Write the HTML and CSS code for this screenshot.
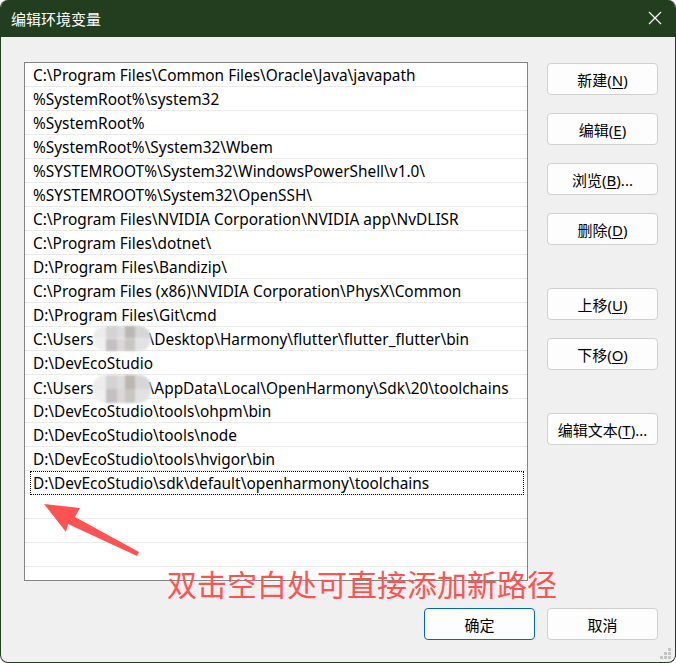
FILE: index.html
```html
<!DOCTYPE html>
<html>
<head>
<meta charset="utf-8">
<link rel="stylesheet" href="styles.css">
</head>
<body>

<div class="window">
    <div class="titlebar">
        <span class="title">编辑环境变量</span>
        <svg class="close" width="14" height="14" viewBox="0 0 14 14">
            <path d="M1 1 L13 13 M13 1 L1 13" stroke="#fff" stroke-width="1.2" fill="none"/>
        </svg>
    </div>

    <div class="content">
        <div class="path-list">
            <div class="row">C:\Program Files\Common Files\Oracle\Java\javapath</div>
            <div class="row">%SystemRoot%\system32</div>
            <div class="row">%SystemRoot%</div>
            <div class="row">%SystemRoot%\System32\Wbem</div>
            <div class="row">%SYSTEMROOT%\System32\WindowsPowerShell\v1.0\</div>
            <div class="row">%SYSTEMROOT%\System32\OpenSSH\</div>
            <div class="row">C:\Program Files\NVIDIA Corporation\NVIDIA app\NvDLISR</div>
            <div class="row">C:\Program Files\dotnet\</div>
            <div class="row">D:\Program Files\Bandizip\</div>
            <div class="row">C:\Program Files (x86)\NVIDIA Corporation\PhysX\Common</div>
            <div class="row">D:\Program Files\Git\cmd</div>
            <div class="row">C:\Users<span class="blur"></span>\Desktop\Harmony\flutter\flutter_flutter\bin</div>
            <div class="row">D:\DevEcoStudio</div>
            <div class="row">C:\Users<span class="blur blur-2"></span>\AppData\Local\OpenHarmony\Sdk\20\toolchains</div>
            <div class="row">D:\DevEcoStudio\tools\ohpm\bin</div>
            <div class="row">D:\DevEcoStudio\tools\node</div>
            <div class="row">D:\DevEcoStudio\tools\hvigor\bin</div>
            <div class="row focused">D:\DevEcoStudio\sdk\default\openharmony\toolchains</div>
            <div class="row"></div>
            <div class="row"></div>
            <div class="row"></div>
            <div class="row"></div>
        </div>

        <div class="side-buttons">
            <button class="btn">新建(<u>N</u>)</button>
            <button class="btn">编辑(<u>E</u>)</button>
            <button class="btn">浏览(<u>B</u>)...</button>
            <button class="btn">删除(<u>D</u>)</button>
            <button class="btn group-start">上移(<u>U</u>)</button>
            <button class="btn">下移(<u>O</u>)</button>
            <button class="btn group-start">编辑文本(<u>T</u>)...</button>
        </div>
    </div>

    <div class="footer">
        <button class="btn primary">确定</button>
        <button class="btn">取消</button>
    </div>

    <svg class="grip" width="12" height="12" viewBox="0 0 12 12">
        <rect x="8" y="0" width="3" height="3" fill="#c4c4c4"/>
        <rect x="4" y="4" width="3" height="3" fill="#c4c4c4"/>
        <rect x="8" y="4" width="3" height="3" fill="#c4c4c4"/>
        <rect x="0" y="8" width="3" height="3" fill="#c4c4c4"/>
        <rect x="4" y="8" width="3" height="3" fill="#c4c4c4"/>
        <rect x="8" y="8" width="3" height="3" fill="#c4c4c4"/>
    </svg>
</div>

<!-- annotation drawn over the dialog -->
<svg class="arrow" width="120" height="70" viewBox="0 0 120 70">
    <polygon points="4,4 40,8 35,17 99,52 97,56 28,24 26,32" fill="#ff5353"/>
</svg>
<div class="note">双击空白处可直接添加新路径</div>

</body>
</html>
```

FILE: styles.css
```css
body {
    margin: 0;
    background-color: #ffffff;
    font-family: "Noto Sans", "Noto Sans CJK SC", sans-serif;
}

.window {
    position: relative;
    width: 676px;
    height: 663px;
    box-sizing: border-box;
    border: 1px solid #233e1f;
    border-top: none;
    border-radius: 8px;
    overflow: hidden;
    background-color: #f0f0f0;
    display: flex;
    flex-direction: column;
}

.titlebar {
    height: 37px;
    flex-shrink: 0;
    background-color: #233e1f;
    display: flex;
    align-items: center;
    justify-content: space-between;
    padding: 0 13px 0 10px;
}

.title {
    color: #ffffff;
    font-family: "Noto Sans CJK SC", sans-serif;
    font-size: 15px;
    line-height: 1;
    margin-top: -1px;
}

.close {
    display: block;
    margin-top: -1px;
}

.content {
    display: flex;
    gap: 19px;
    padding: 25px 17px 0 23px;
}

.path-list {
    width: 504px;
    height: 519px;
    box-sizing: border-box;
    border: 1px solid #848484;
    background-color: #ffffff;
    overflow: hidden;
    flex-shrink: 0;
}

.row {
    height: 24px;
    box-sizing: border-box;
    border-bottom: 1px solid #ebebeb;
    padding: 2px 0 0 8px;
    font-size: 15.4px;
    line-height: 21px;
    color: #000000;
    white-space: nowrap;
}

.row.focused {
    outline: 1px dotted #000000;
    outline-offset: -1px;
    margin: 0 3px 0 5px;
    padding-left: 3px;
}

.blur {
    display: inline-block;
    width: 58px;
    height: 25px;
    vertical-align: middle;
    margin: -4px -2px 0 -1px;
    border-radius: 12px;
    filter: blur(1px);
    background:
        linear-gradient(to right, #ececec 0 22%, #d4d2d3 22% 42%, #dcdcdc 42% 56%, #bab6b1 56% 72%, #d6d6d6 72%) top / 100% 50% no-repeat,
        linear-gradient(to right, #f0f0f0 0 22%, #c3bfc2 22% 42%, #d9d7d8 42% 56%, #c9c5c0 56% 72%, #e2e2e2 72%) bottom / 100% 50% no-repeat;
}

.blur-2 {
    margin-top: -2px;
    height: 28px;
}

.side-buttons {
    display: flex;
    flex-direction: column;
    gap: 18px;
    padding-top: 1px;
}

.btn {
    width: 111px;
    height: 32px;
    box-sizing: border-box;
    border: 1px solid #d0d0d0;
    border-radius: 4px;
    background-color: #fdfdfd;
    color: #000000;
    font-family: "Noto Sans", "Noto Sans CJK SC", sans-serif;
    font-size: 15px;
    padding: 0;
    cursor: default;
}

.btn u {
    text-underline-offset: 2px;
}

.group-start {
    margin-top: 25px;
}

.btn.primary {
    border-color: #0067c0;
}

.footer {
    margin-top: auto;
    display: flex;
    justify-content: flex-end;
    gap: 12px;
    padding: 0 17px 22px 0;
}

.grip {
    position: absolute;
    right: 3px;
    bottom: 2px;
}

.arrow {
    position: absolute;
    left: 40px;
    top: 500px;
}

.note {
    position: absolute;
    left: 167px;
    top: 566px;
    font-family: "Noto Sans CJK SC", sans-serif;
    font-size: 30px;
    line-height: 34px;
    color: #ff5353;
    white-space: nowrap;
}
```
